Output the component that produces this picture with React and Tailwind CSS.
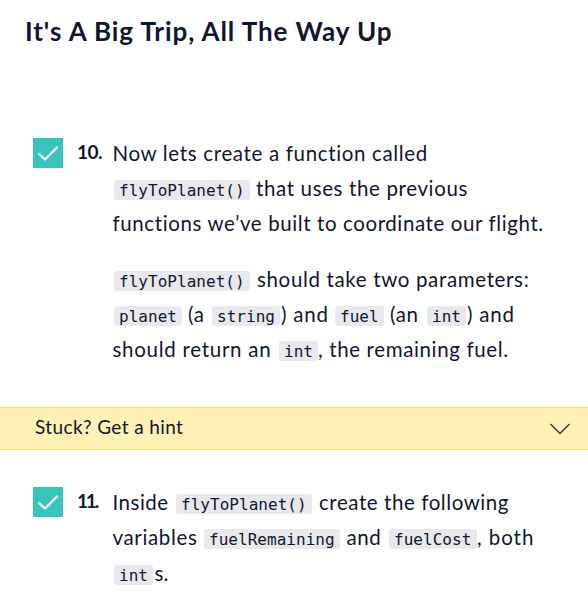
import React from "react";

function Code({ children, className = "" }) {
  return (
    <code
      className={`mt-[9px] block h-5 shrink-0 rounded-[3px] bg-[#e9e8ed] pl-[5px] font-['DejaVu_Sans_Mono',monospace] text-[16px] leading-[22px] tracking-[0.03px] text-[#10162f] ${className}`}
    >
      {children}
    </code>
  );
}

function T({ children, className = "tracking-[0.65px]" }) {
  return <span className={`block shrink-0 whitespace-pre ${className}`}>{children}</span>;
}

function Line({ children, className = "" }) {
  return <div className={`flex h-[35px] items-start leading-[35px] ${className}`}>{children}</div>;
}

function Step({ number, numberClass, children }) {
  return (
    <section className="flex pl-[33px]">
      <div className="mt-[2px] flex size-[30px] shrink-0 items-center justify-center bg-[#37c3be]">
        <svg width="22" height="18" viewBox="0 0 22 18" fill="none" stroke="white" strokeWidth="2.2" strokeLinecap="round" strokeLinejoin="round">
          <path d="M2 10 L8 15.5 L20 3.5" />
        </svg>
      </div>
      <div className={`ml-[14px] w-[36px] shrink-0 text-[19px] leading-8 font-bold ${numberClass}`}>{number}</div>
      <div className="-ml-[0.5px] text-[20.5px]">{children}</div>
    </section>
  );
}

export default function App() {
  return (
    <main className="h-[604px] w-[588px] overflow-hidden bg-white font-['Lato',sans-serif] text-[#10162f]">
      <h1 className="pt-[13px] pl-[25px] text-[26px] leading-9 font-bold tracking-[0.92px] whitespace-nowrap">
        It's A Big Trip, All The Way Up
      </h1>

      <div className="mt-[87px]">
        <Step number="10." numberClass="tracking-[-0.5px]">
          <Line><T className="tracking-[0.66px]">Now lets create a function called</T></Line>
          <Line>
            <Code className="ml-[1.5px] w-[136px]">flyToPlanet()</Code>
            <T className="ml-[6px] tracking-[0.63px]">that uses the previous</T>
          </Line>
          <Line><T className="tracking-[0.6px]">functions we’ve built to coordinate our flight.</T></Line>
          <Line className="mt-[21px]">
            <Code className="ml-[1.5px] w-[136px]">flyToPlanet()</Code>
            <T className="ml-[7px] tracking-[0.65px]">should take two parameters:</T>
          </Line>
          <Line>
            <Code className="ml-[1.5px] w-[68px]">planet</Code>
            <T className="w-[30px] pl-[6px] tracking-[0.6px]">(a</T>
            <Code className="w-[68px]">string</Code>
            <T className="w-[55px] pl-px tracking-[0.8px]">) and</T>
            <Code className="w-[49px]">fuel</Code>
            <T className="w-[43px] pl-[6px] tracking-[0.6px]">(an</T>
            <Code className="w-[39px]">int</Code>
            <T className="pl-px tracking-[0.8px]">) and</T>
          </Line>
          <Line>
            <T className="w-[166.5px] tracking-[0.72px]">should return an</T>
            <Code className="w-[39px]">int</Code>
            <T className="tracking-[0.63px]">, the remaining fuel.</T>
          </Line>
        </Step>
      </div>

      <div className="mt-[40px] flex h-[43px] items-start justify-between border-y border-[#ffe05c] bg-[#fff0b3] pr-[17px] pl-[35px]">
        <span className="pt-[3px] text-[19px] leading-8 tracking-[0.4px]">Stuck? Get a hint</span>
        <svg className="mt-[14px]" width="22" height="14" viewBox="0 0 22 14" fill="none" stroke="#353748" strokeWidth="1.4">
          <path d="M1.5 2 L11 11.5 L20.5 2" />
        </svg>
      </div>

      <div className="mt-[35px]">
        <Step number="11." numberClass="tracking-[-2.2px]">
          <Line>
            <T className="w-[63.5px] tracking-[0.5px]">Inside</T>
            <Code className="w-[136px]">flyToPlanet()</Code>
            <T className="ml-[7px] tracking-[0.57px]">create the following</T>
          </Line>
          <Line>
            <T className="w-[91.5px] tracking-[0.65px]">variables</T>
            <Code className="w-[136px]">fuelRemaining</Code>
            <T className="w-[49px] pl-[6.5px] tracking-[0.6px]">and</T>
            <Code className="w-[88px]">fuelCost</Code>
            <T className="tracking-[0.95px]">, both</T>
          </Line>
          <Line className="mt-px">
            <Code className="ml-[1.5px] w-[39px]">int</Code>
            <T className="pl-[1.5px]">s.</T>
          </Line>
        </Step>
      </div>
    </main>
  );
}
